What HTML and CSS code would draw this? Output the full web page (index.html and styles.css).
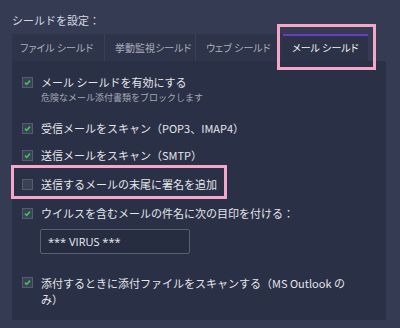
FILE: index.html
```html
<!DOCTYPE html>
<html lang="ja">
<head>
<meta charset="utf-8">
<link rel="stylesheet" href="styles.css">
</head>
<body>
<div class="page">
  <div class="title">シールドを設定：</div>
  <div class="tabs">
    <div class="tab">ファイル シールド</div>
    <div class="tab">挙動監視シールド</div>
    <div class="tab">ウェブ シールド</div>
    <div class="tab active">メール シールド</div>
  </div>
  <div class="panel">
    <div class="row r1"><span class="cb on"><svg viewBox="0 0 11 11"><path d="M2.4 5.6 L4.5 7.7 L8.6 3.2" /></svg></span><span class="label">メール シールドを有効にする</span></div>
    <div class="sub">危険なメール添付書類をブロックします</div>
    <div class="row r2"><span class="cb on"><svg viewBox="0 0 11 11"><path d="M2.4 5.6 L4.5 7.7 L8.6 3.2" /></svg></span><span class="label">受信メールをスキャン（POP3、IMAP4）</span></div>
    <div class="row r3"><span class="cb on"><svg viewBox="0 0 11 11"><path d="M2.4 5.6 L4.5 7.7 L8.6 3.2" /></svg></span><span class="label">送信メールをスキャン（SMTP）</span></div>
    <div class="row r4"><span class="cb"></span><span class="label">送信するメールの末尾に署名を追加</span></div>
    <div class="row r5"><span class="cb on"><svg viewBox="0 0 11 11"><path d="M2.4 5.6 L4.5 7.7 L8.6 3.2" /></svg></span><span class="label">ウイルスを含むメールの件名に次の目印を付ける：</span></div>
    <div class="input">*** VIRUS ***</div>
    <div class="row r6 multi"><span class="cb on"><svg viewBox="0 0 11 11"><path d="M2.4 5.6 L4.5 7.7 L8.6 3.2" /></svg></span><span class="label wrap">添付するときに添付ファイルをスキャンする（MS Outlook のみ）</span></div>
  </div>
  <div class="hl hl-tab"></div>
  <div class="hl hl-row"></div>
</div>
</body>
</html>
```

FILE: styles.css
```css
html, body {
  margin: 0;
  padding: 0;
}
body {
  background: #343b53;
  width: 400px;
  height: 328px;
  overflow: hidden;
  font-family: "Noto Sans CJK JP", "Noto Sans", sans-serif;
  color: #e4e6ec;
}
.page {
  position: relative;
  width: 400px;
  height: 328px;
}
.title {
  padding: 11px 0 0 12px;
  height: 23px;
  line-height: 18px;
  font-size: 11px;
  color: #d6d9e1;
}
.tabs {
  display: flex;
  margin-left: 12px;
  height: 27px;
}
.tab {
  box-sizing: border-box;
  flex: none;
  height: 27px;
  line-height: 27px;
  padding: 0 0 0 8px;
  font-size: 10px;
  font-feature-settings: "palt";
  white-space: nowrap;
  color: #a9afbd;
  background: #2e3449;
  border-right: 1px solid #394055;
}
.tab:nth-child(1) { width: 93px; }
.tab:nth-child(2) { width: 91px; padding-left: 10px; }
.tab:nth-child(3) { width: 87px; padding-left: 10px; border-right: none; }
.tab.active {
  width: 85px;
  padding-left: 9px;
  color: #f2f3f6;
  background: #2c3247;
  border-top: 2px solid #6c3cc0;
  line-height: 24px;
  border-right: none;
}
.panel {
  box-sizing: border-box;
  margin-left: 12px;
  width: 374px;
  height: 259px;
  background: #2a3045;
  padding: 13px 0 0 10px;
}
.row {
  display: flex;
  align-items: center;
  height: 16px;
  font-size: 11px;
  line-height: 16px;
}
.cb {
  box-sizing: border-box;
  width: 11px;
  height: 11px;
  border: 1px solid #555c6f;
  background: #3a4154;
  margin-right: 8px;
  flex: none;
  display: flex;
}
.cb svg {
  width: 9px;
  height: 9px;
}
.cb svg path {
  fill: none;
  stroke: #3cc257;
  stroke-width: 1.9;
}
.sub {
  margin: 1px 0 0 19px;
  height: 14px;
  line-height: 14px;
  font-size: 9px;
  color: #a4aab8;
}
.r2 { margin-top: 15px; }
.r3 { margin-top: 11px; }
.r4 { margin-top: 13px; }
.r5 { margin-top: 13px; }
.input {
  box-sizing: border-box;
  margin: 8px 0 0 18px;
  width: 150px;
  height: 25px;
  border: 1px solid #5a6073;
  border-radius: 2px;
  background: #272d41;
  padding-left: 7px;
  line-height: 23px;
  font-family: "Open Sans", "Noto Sans", sans-serif;
  font-size: 11px;
  color: #eceef2;
}
.r6 { margin-top: 21px; }
.row.multi {
  height: auto;
  align-items: flex-start;
}
.row.multi .cb { margin-top: 2px; }
.wrap { max-width: 305px; }
.hl {
  position: absolute;
  box-sizing: border-box;
  border: 3px solid #f4a7c7;
}
.hl-tab {
  left: 277px;
  top: 24px;
  width: 99px;
  height: 46px;
}
.hl-row {
  left: 11px;
  top: 165px;
  width: 216px;
  height: 34px;
}
```
